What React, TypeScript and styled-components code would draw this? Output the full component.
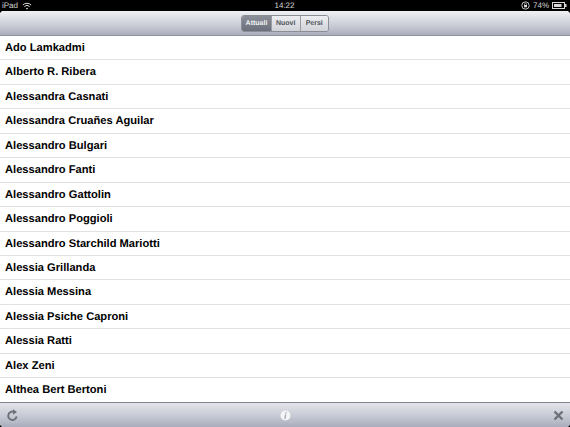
import styled, { createGlobalStyle } from 'styled-components';

const names = [
  'Ado Lamkadmi',
  'Alberto R. Ribera',
  'Alessandra Casnati',
  'Alessandra Cruañes Aguilar',
  'Alessandro Bulgari',
  'Alessandro Fanti',
  'Alessandro Gattolin',
  'Alessandro Poggioli',
  'Alessandro Starchild Mariotti',
  'Alessia Grillanda',
  'Alessia Messina',
  'Alessia Psiche Caproni',
  'Alessia Ratti',
  'Alex Zeni',
  'Althea Bert Bertoni',
];

const tabs = ['Attuali', 'Nuovi', 'Persi'];

const GlobalStyle = createGlobalStyle`
  html, body {
    margin: 0;
    padding: 0;
    background: #000;
  }
  body {
    font-family: "Liberation Sans", Arial, sans-serif;
    text-rendering: geometricPrecision;
  }
`;

const Screen = styled.div`
  position: relative;
  display: flex;
  flex-direction: column;
  width: 570px;
  height: 427px;
  overflow: hidden;
  background: #fff;
`;

const StatusBar = styled.div`
  display: grid;
  grid-template-columns: 1fr auto 1fr;
  align-items: center;
  height: 11px;
  padding: 0 3px 0 2px;
  background: #000;
  color: #d8d8d8;
  font-size: 8px;
  line-height: 11px;
`;

const StatusLeft = styled.div`
  display: flex;
  align-items: center;
  gap: 4px;
`;

const StatusRight = styled.div`
  display: flex;
  align-items: center;
  justify-content: flex-end;
  gap: 3px;
`;

const Toolbar = styled.div`
  display: flex;
  align-items: center;
  justify-content: center;
  height: 24px;
  background: linear-gradient(#f0f1f4, #c9ccd6 60%, #abafbd);
  border-bottom: 1px solid #8f939f;
`;

const Segments = styled.div`
  display: flex;
  height: 15px;
  border: 1px solid #8b8e96;
  border-radius: 3px;
  overflow: hidden;
`;

const Segment = styled.div<{ $active?: boolean }>`
  box-sizing: border-box;
  display: flex;
  align-items: center;
  justify-content: center;
  width: ${(p) => (p.$active ? '29px' : '28.5px')};
  font-size: 7px;
  font-weight: bold;
  color: ${(p) => (p.$active ? '#f2f3f5' : '#4f5257')};
  background: ${(p) =>
    p.$active
      ? 'linear-gradient(#8b8f99, #6a6f7b)'
      : 'linear-gradient(#eceef1, #d0d2d8)'};
  & + & {
    border-left: 1px solid #9a9da4;
  }
`;

const List = styled.div`
  flex: 1;
  min-height: 0;
  overflow: hidden;
`;

const Row = styled.div`
  box-sizing: border-box;
  height: 24.45px;
  padding-left: 5px;
  border-bottom: 1px solid #e2e2e2;
  color: #000;
  font-size: 11.15px;
  font-weight: bold;
  line-height: 24.5px;
  white-space: nowrap;
`;

const BottomBar = styled.div`
  display: grid;
  grid-template-columns: 1fr auto 1fr;
  align-items: center;
  height: 24px;
  padding: 0 6px;
  border-top: 1px solid #7f838d;
  background: linear-gradient(#e4e5ea, #c6c9d3 55%, #a9adbc);
`;

const BarEnd = styled.div`
  display: flex;
  justify-content: flex-end;
`;

const BarStart = styled.div`
  display: flex;
`;

const Corner = styled.div<{ $side: 'left' | 'right'; $top: number }>`
  position: absolute;
  top: ${(p) => p.$top}px;
  ${(p) => p.$side}: 0;
  width: 2px;
  height: 2px;
  background: #000;
  clip-path: ${(p) =>
    p.$side === 'left'
      ? p.$top < 100
        ? 'polygon(0 0, 100% 0, 0 100%)'
        : 'polygon(0 0, 100% 100%, 0 100%)'
      : p.$top < 100
        ? 'polygon(0 0, 100% 0, 100% 100%)'
        : 'polygon(100% 0, 100% 100%, 0 100%)'};
`;

const WifiIcon = () => (
  <svg width="10" height="8" viewBox="0 0 10 8" fill="none" stroke="#d8d8d8">
    <path d="M.8 3A6 6 0 0 1 9.2 3" strokeWidth="1" />
    <path d="M2.4 4.6A3.6 3.6 0 0 1 7.6 4.6" strokeWidth="1" />
    <path d="M5 7.6 3.9 6.2a1.6 1.6 0 0 1 2.2 0Z" fill="#d8d8d8" stroke="none" />
  </svg>
);

const LockIcon = () => (
  <svg width="9" height="9" viewBox="0 0 9 9" fill="none">
    <circle cx="4.5" cy="4.5" r="3.7" stroke="#d8d8d8" strokeWidth="0.9" />
    <rect x="3" y="4" width="3" height="2.3" fill="#d8d8d8" />
    <path d="M3.5 4V3.2a1 1 0 0 1 2 0V4" stroke="#d8d8d8" strokeWidth="0.6" />
  </svg>
);

const BatteryIcon = () => (
  <svg width="15" height="7" viewBox="0 0 15 7" fill="none">
    <rect x=".5" y=".5" width="12" height="6" stroke="#d8d8d8" />
    <rect x="2" y="2" width="7.5" height="3" fill="#d8d8d8" />
    <rect x="13" y="2" width="1.5" height="3" fill="#d8d8d8" />
  </svg>
);

const RefreshIcon = () => (
  <svg width="13" height="13" viewBox="0 0 13 13" fill="none">
    <path d="M10.6 7.4A4.2 4.2 0 1 1 7.8 2.8" stroke="#6c7079" strokeWidth="1.9" />
    <path d="M7 .2 11 3 7 5.8Z" fill="#6c7079" />
  </svg>
);

const InfoIcon = () => (
  <svg width="11" height="11" viewBox="0 0 11 11">
    <circle cx="5.5" cy="5.5" r="5" fill="#f4f5f7" />
    <path d="M5.4 2.2h1.5L6.5 3.5H5.1ZM4.9 4.5h1.4L5.7 8.8H4.3Z" fill="#a3a7b2" />
  </svg>
);

const CloseIcon = () => (
  <svg width="11" height="11" viewBox="0 0 11 11" fill="none">
    <path d="M1.5 1.5l8 8M9.5 1.5l-8 8" stroke="#6c7079" strokeWidth="2.4" />
  </svg>
);

export default function App() {
  return (
    <Screen>
      <GlobalStyle />
      <StatusBar>
        <StatusLeft>
          <span>iPad</span>
          <WifiIcon />
        </StatusLeft>
        <span>14:22</span>
        <StatusRight>
          <LockIcon />
          <span>74%</span>
          <BatteryIcon />
        </StatusRight>
      </StatusBar>
      <Toolbar>
        <Segments>
          {tabs.map((tab, i) => (
            <Segment key={tab} $active={i === 0}>
              {tab}
            </Segment>
          ))}
        </Segments>
      </Toolbar>
      <List>
        {names.map((name) => (
          <Row key={name}>{name}</Row>
        ))}
      </List>
      <BottomBar>
        <BarStart>
          <RefreshIcon />
        </BarStart>
        <InfoIcon />
        <BarEnd>
          <CloseIcon />
        </BarEnd>
      </BottomBar>
      <Corner $side="left" $top={11} />
      <Corner $side="right" $top={11} />
      <Corner $side="left" $top={425} />
      <Corner $side="right" $top={425} />
    </Screen>
  );
}
